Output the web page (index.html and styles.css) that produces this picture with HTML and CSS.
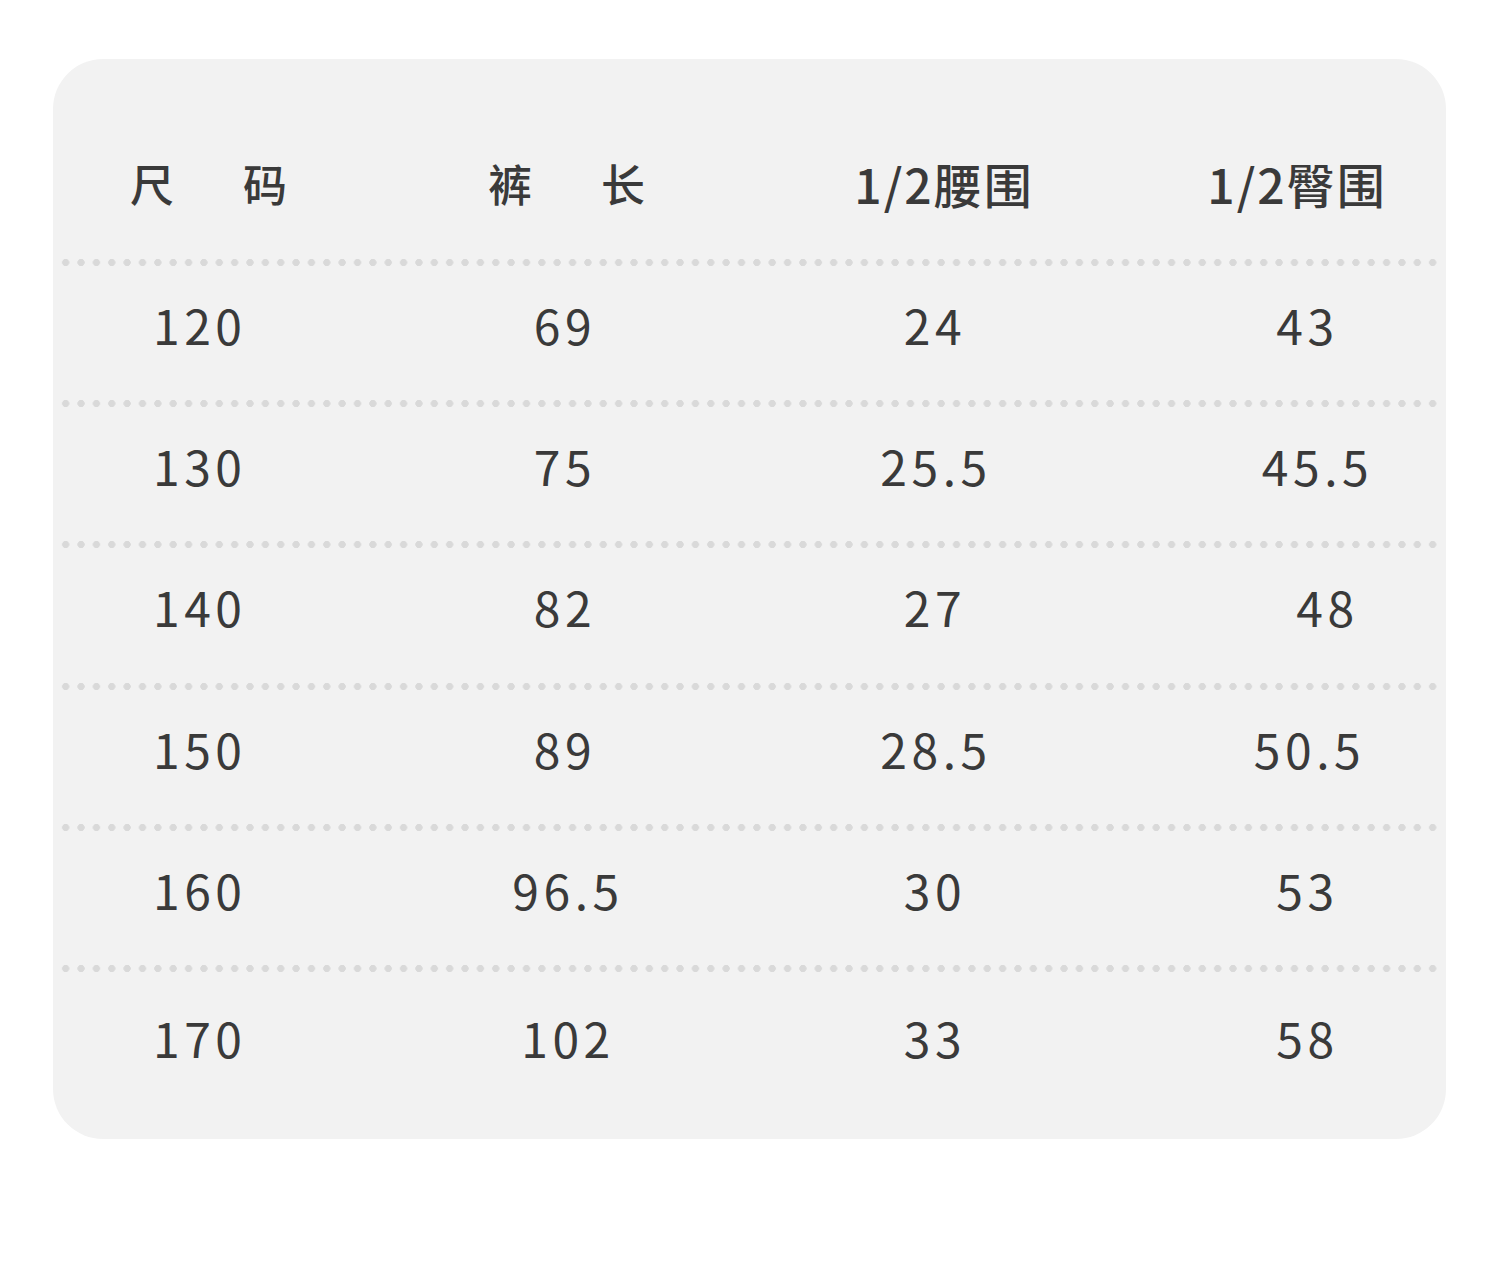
FILE: index.html
```html
<!DOCTYPE html>
<html lang="zh-CN">
<head>
<meta charset="utf-8">
<title>尺码表</title>
<link rel="stylesheet" href="styles.css">
</head>
<body>
<div class="card">
  <div class="row head">
    <div class="c c1"><span>尺</span><span class="gap">码</span></div>
    <div class="c c2"><span>裤</span><span class="gap">长</span></div>
    <div class="c c3">1/2腰围</div>
    <div class="c c4">1/2臀围</div>
  </div>
  <div class="dots"></div>
  <div class="row">
    <div class="c c1">120</div><div class="c c2">69</div><div class="c c3">24</div><div class="c c4">43</div>
  </div>
  <div class="dots"></div>
  <div class="row">
    <div class="c c1">130</div><div class="c c2">75</div><div class="c c3 w">25.5</div><div class="c c4 r">45.5</div>
  </div>
  <div class="dots"></div>
  <div class="row">
    <div class="c c1">140</div><div class="c c2">82</div><div class="c c3">27</div><div class="c c4 rr">48</div>
  </div>
  <div class="dots"></div>
  <div class="row">
    <div class="c c1">150</div><div class="c c2">89</div><div class="c c3 w">28.5</div><div class="c c4 l">50.5</div>
  </div>
  <div class="dots"></div>
  <div class="row">
    <div class="c c1">160</div><div class="c c2 w">96.5</div><div class="c c3">30</div><div class="c c4">53</div>
  </div>
  <div class="dots"></div>
  <div class="row last">
    <div class="c c1">170</div><div class="c c2 w">102</div><div class="c c3">33</div><div class="c c4">58</div>
  </div>
</div>
</body>
</html>
```
FILE: styles.css
```css
html, body {
  margin: 0;
  padding: 0;
  background: #ffffff;
}
body {
  font-family: "Noto Sans CJK SC", "Noto Sans", sans-serif;
  color: #3a3a3a;
}
.card {
  margin: 59px 0 0 53px;
  width: 1393px;
  height: 1080px;
  box-sizing: border-box;
  background: #f2f2f2;
  border-radius: 50px;
  display: flex;
  flex-direction: column;
}
.row {
  display: grid;
  grid-template-columns: 290px 444px 296px 363px;
  align-items: center;
  height: 134.4px;
  flex: none;
  font-size: 48px;
  letter-spacing: 4.5px;
  padding-bottom: 18px;
  box-sizing: border-box;
}
.row.head {
  height: 199.5px;
  padding-bottom: 0;
  padding-top: 48px;
  font-size: 44px;
  font-weight: 500;
  letter-spacing: 1px;
}
.row.last {
  height: 170px;
  padding-bottom: 40px;
}
.c {
  text-align: center;
  white-space: nowrap;
}
.c1 {
  text-align: left;
  padding-left: 100px;
}
.c2 { padding-left: 0; }
.c3 { padding-left: 0; }
.c4 { padding-left: 86px; }
.c2.w { padding-left: 6px; }
.c3.w { padding-left: 2px; }
.c4.r { padding-left: 106px; }
.c4.rr { padding-left: 126px; }
.c4.l { padding-left: 90px; }

.head .c1 { padding-left: 77px; }
.head .c2 { padding-left: 4px; }
.head .c3 { padding-left: 18px; font-size: 48px; letter-spacing: 2px; }
.head .c4 { padding-left: 65px; font-size: 48px; letter-spacing: 2px; }
.gap {
  margin-left: 68px;
}
.dots {
  height: 7px;
  flex: none;
  margin: 0 4.5px 0 4.5px;
  background-image: radial-gradient(circle, #d9d9d9 3.3px, rgba(217,217,217,0) 3.9px);
  background-size: 15.37px 7px;
  background-repeat: repeat-x;
  background-position: 0 0;
}
```
